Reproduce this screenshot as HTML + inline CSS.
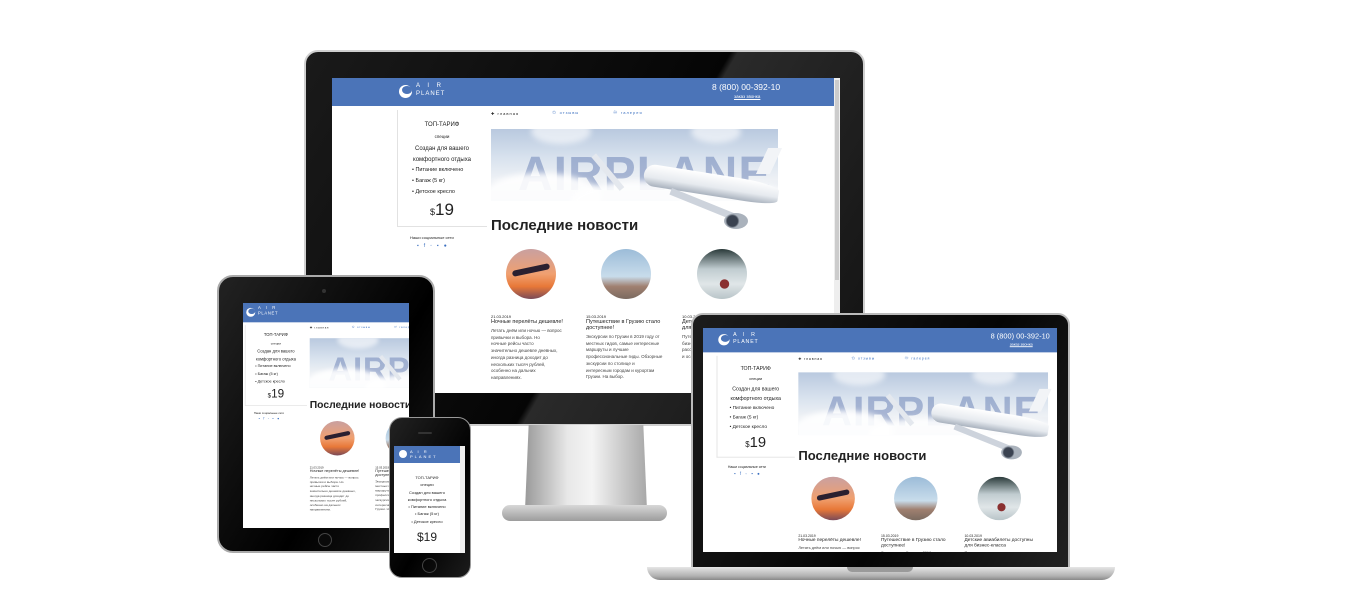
<!DOCTYPE html>
<html><head><meta charset="utf-8"><style>
*{margin:0;padding:0;box-sizing:border-box}
body{width:1366px;height:608px;background:#fff;position:relative;overflow:hidden;font-family:"Liberation Sans",sans-serif}
.a{position:absolute}
.scr{position:absolute;overflow:hidden;background:#fff}
.site{position:absolute;left:0;top:0;width:508px;height:315px;transform-origin:0 0}
.site .a{white-space:nowrap}
.hd{position:absolute;left:-120px;top:0;width:760px;height:28px;background:#4b74b8}
.t{color:#222}
.sky{background:linear-gradient(180deg,#b9c9df 0%,#d8e2ee 40%,#eef1f5 70%,#dfe5ee 100%);overflow:hidden}
.cl{position:absolute;border-radius:50%;background:#fff;filter:blur(3px)}
</style></head><body>

<!-- monitor -->
<div class="a" style="left:304px;top:50px;width:561px;height:376px;border-radius:14px 14px 3px 3px;background:linear-gradient(120deg,#1a1a1a 0%,#050505 55%,#2a2a2a 56%,#111 100%);border:2px solid #cfcfcf"></div>
<div class="a" style="left:525px;top:425px;width:122px;height:85px;background:linear-gradient(90deg,#9a9a9a,#e8e8e8 35%,#f4f4f4 55%,#a8a8a8);clip-path:polygon(3% 0,97% 0,100% 100%,0 100%)"></div>
<div class="a" style="left:502px;top:505px;width:165px;height:16px;border-radius:8px;background:linear-gradient(180deg,#d8d8d8,#9c9c9c)"></div>

<div class="scr" style="left:332px;top:78px;width:508px;height:315px">
 <div class="site" id="S"></div>
</div>

<!-- tablet -->
<div class="a" style="left:217px;top:275px;width:218px;height:278px;border-radius:16px;background:linear-gradient(120deg,#222,#000 60%,#1c1c1c);border:2px solid #aaa"></div>
<div class="a" style="left:322px;top:289px;width:4px;height:4px;border-radius:50%;background:#333"></div>
<div class="a" style="left:318px;top:533px;width:14px;height:14px;border-radius:50%;border:1px solid #444;background:#0a0a0a"></div>
<div class="scr" style="left:243px;top:303px;width:166px;height:225px">
 <div class="site" id="T" style="transform:translateX(-43px) scale(.69)"></div>
</div>

<!-- laptop -->
<div class="a" style="left:691px;top:313px;width:379px;height:256px;border-radius:12px 12px 0 0;background:linear-gradient(120deg,#1c1c1c,#050505 60%,#222);border:2px solid #bbb"></div>
<div class="scr" style="left:703px;top:328px;width:354px;height:224px">
 <div class="site" id="L" style="transform:translateX(-43px) scale(.87)"></div>
</div>
<div class="a" style="left:647px;top:567px;width:468px;height:13px;border-radius:0 0 20px 20px;background:linear-gradient(180deg,#e6e6e6,#b0b0b0 70%,#888)"></div>
<div class="a" style="left:847px;top:567px;width:66px;height:5px;border-radius:0 0 5px 5px;background:#9a9a9a"></div>

<!-- phone -->
<div class="a" style="left:389px;top:417px;width:82px;height:161px;border-radius:13px;background:linear-gradient(120deg,#222,#000 60%,#1c1c1c);border:1px solid #999"></div>
<div class="a" style="left:418px;top:432px;width:14px;height:2px;background:#333;border-radius:1px"></div>
<div class="a" style="left:422px;top:558px;width:15px;height:15px;border-radius:50%;border:1px solid #444"></div>
<div class="scr" style="left:394px;top:446px;width:71px;height:107px">
 <div class="a" style="left:0;top:0;width:71px;height:17px;background:#4b74b8"></div>
 <div class="a" style="left:5px;top:4px;width:8px;height:8px;border-radius:50%;background:#fff"></div>
 <div class="a" style="left:16px;top:3px;font-size:4px;color:#fff;letter-spacing:2px">A I R<br>PLANET</div>
 <div class="a" style="left:66px;top:0;width:5px;height:107px;background:#eee"></div>
 <div class="a t" style="left:0;width:66px;top:28px;text-align:center;font-size:4px;line-height:7.3px">ТОП-ТАРИФ<br>специи<br>Создан для вашего<br>комфортного отдыха<br>• Питание включено<br>• Багаж (5 кг)<br>• Детское кресло</div>
 <div class="a t" style="left:0;width:66px;top:84px;text-align:center;font-size:12px">$19</div>
</div>

<script>
const site=`
<div class="hd"></div>
<div class="a" style="left:67px;top:7px;width:13px;height:13px;border-radius:50%;background:#fff"></div>
<div class="a" style="left:70px;top:8px;width:10px;height:8px;border-radius:50%;background:#4b74b8"></div>
<div class="a" style="left:84px;top:4px;font-size:6px;color:#fff;letter-spacing:3px;line-height:8px">A I R<br><span style="letter-spacing:1px">PLANET</span></div>
<div class="a" style="left:380px;top:4px;font-size:8.5px;color:#fff">8 (800) 00-392-10</div>
<div class="a" style="left:402px;top:16px;font-size:4.5px;color:#fff;text-decoration:underline">заказ звонка</div>
<div class="a" style="left:502px;top:0;width:6px;height:315px;background:#eee"></div>
<div class="a" style="left:503px;top:2px;width:4px;height:200px;background:#ccc"></div>
<div class="a" style="left:65px;top:32px;width:90px;height:117px;border-left:1px solid #e2e2e2;border-bottom:1px solid #e2e2e2"></div>
<div class="a t" style="left:65px;width:90px;top:42px;text-align:center;font-size:6px;line-height:11.4px">ТОП-ТАРИФ<br><span style="font-size:4.5px">специи</span><br>Создан для вашего<br>комфортного отдыха</div>
<div class="a t" style="left:80px;top:87px;font-size:5.5px;line-height:10.8px">• Питание включено<br>• Багаж (5 кг)<br>• Детское кресло</div>
<div class="a t" style="left:98px;top:122px;font-size:17px"><span style="font-size:9px">$</span>19</div>
<div class="a t" style="left:78px;top:157px;font-size:4px">Наши социальные сети</div>
<div class="a" style="left:85px;top:165px;font-size:5px;color:#3a6fc0;letter-spacing:5px">▪f◦▪●</div>
<div class="a t" style="left:159px;top:33px;font-size:4px;letter-spacing:1px">✚ главная</div>
<div class="a" style="left:220px;top:32px;font-size:5px;color:#3a6fc0;letter-spacing:1px">✩ <span style="font-size:4px">отзывы</span></div>
<div class="a" style="left:281px;top:32px;font-size:5px;color:#3a6fc0;letter-spacing:1px">♾ <span style="font-size:4px">галерея</span></div>
<div class="a sky" style="left:159px;top:51px;width:287px;height:72px">
 <div class="a" style="left:27px;top:22px;font-size:48px;font-weight:bold;color:#6f86b8;opacity:.55;letter-spacing:1px;line-height:48px">AIRPLANE</div>
 <div class="cl" style="left:-10px;top:44px;width:120px;height:50px;opacity:.9"></div>
 <div class="cl" style="left:80px;top:52px;width:140px;height:40px;opacity:.9"></div>
 <div class="cl" style="left:190px;top:54px;width:120px;height:40px;opacity:.9"></div>
 <div class="cl" style="left:40px;top:-10px;width:60px;height:25px;opacity:.6"></div>
 <div class="cl" style="left:200px;top:-8px;width:50px;height:22px;opacity:.6"></div>
</div>
<div class="a" style="left:287px;top:67px;width:6px;height:44px;background:#e4e8ee;transform:rotate(-40deg);transform-origin:50% 100%"></div>
<div class="a" style="left:312px;top:85px;width:136px;height:22px;border-radius:14px 40% 30% 14px;background:linear-gradient(180deg,#fff,#e6eaef 60%,#a9b2be);transform:rotate(9deg);transform-origin:0 50%"></div>
<div class="a" style="left:430px;top:70px;width:14px;height:26px;background:#f2f4f7;transform:skewX(-25deg)"></div>
<div class="a" style="left:340px;top:110px;width:70px;height:7px;background:#cdd3dc;transform:rotate(22deg);transform-origin:0 0"></div>
<div class="a" style="left:392px;top:135px;width:24px;height:16px;border-radius:50%;background:radial-gradient(circle at 35% 50%,#3a4250 0 30%,#aab2bc 40%)"></div>
<div class="a" style="left:159px;top:139px;font-size:15px;font-weight:bold;color:#222">Последние новости</div>
<div class="a" style="left:174px;top:171px;width:50px;height:50px;border-radius:50%;background:linear-gradient(180deg,#c9a0a0,#f0a070 50%,#e87838 75%,#7a4a58)"></div>
<div class="a" style="left:180px;top:189px;width:38px;height:6px;background:#2a2030;transform:rotate(-12deg);border-radius:3px"></div>
<div class="a" style="left:269px;top:171px;width:50px;height:50px;border-radius:50%;background:linear-gradient(180deg,#9cbcd8,#c8dceb 55%,#a08070 75%,#7a6a60)"></div>
<div class="a" style="left:365px;top:171px;width:50px;height:50px;border-radius:50%;background:radial-gradient(circle at 55% 70%,#8a3030 0 10%,transparent 11%),linear-gradient(180deg,#2a3a3a,#c0ccd0 40%,#e0e6e8 70%,#b8c4c8)"></div>
<div class="a t" style="left:159px;top:236px;font-size:4px">21.03.2019</div>
<div class="a t" style="left:159px;top:241px;font-size:5.5px">Ночные перелёты дешевле!</div>
<div class="a" style="left:159px;top:250px;font-size:4.5px;line-height:6.7px;color:#444">Летать днём или ночью — вопрос<br>привычки и выбора. Но<br>ночные рейсы часто<br>значительно дешевле дневных,<br>иногда разница доходит до<br>нескольких тысяч рублей,<br>особенно на дальних<br>направлениях.</div>
<div class="a t" style="left:254px;top:236px;font-size:4px">15.03.2019</div>
<div class="a t" style="left:254px;top:241px;font-size:5.5px;line-height:6px">Путешествие в Грузию стало<br>доступнее!</div>
<div class="a" style="left:254px;top:256px;font-size:4.5px;line-height:6.7px;color:#444">Экскурсии по Грузии в 2019 году от<br>местных гидов, самые интересные<br>маршруты и лучшие<br>профессиональные гиды. Обзорные<br>экскурсии по столице и<br>интересным городам и курортам<br>Грузии. На выбор.</div>
<div class="a t" style="left:350px;top:236px;font-size:4px">10.03.2019</div>
<div class="a t" style="left:350px;top:241px;font-size:5.5px;line-height:6px">Детские авиабилеты доступны<br>для бизнес-класса</div>
<div class="a" style="left:350px;top:256px;font-size:4.5px;line-height:6.7px;color:#444">Путешествуя с детьми<br>бизнес-классом, можно<br>рассчитывать на скидки<br>и особые условия.</div>
`;
for(const id of ['S','T','L'])document.getElementById(id).innerHTML=site;
</script>
</body></html>
